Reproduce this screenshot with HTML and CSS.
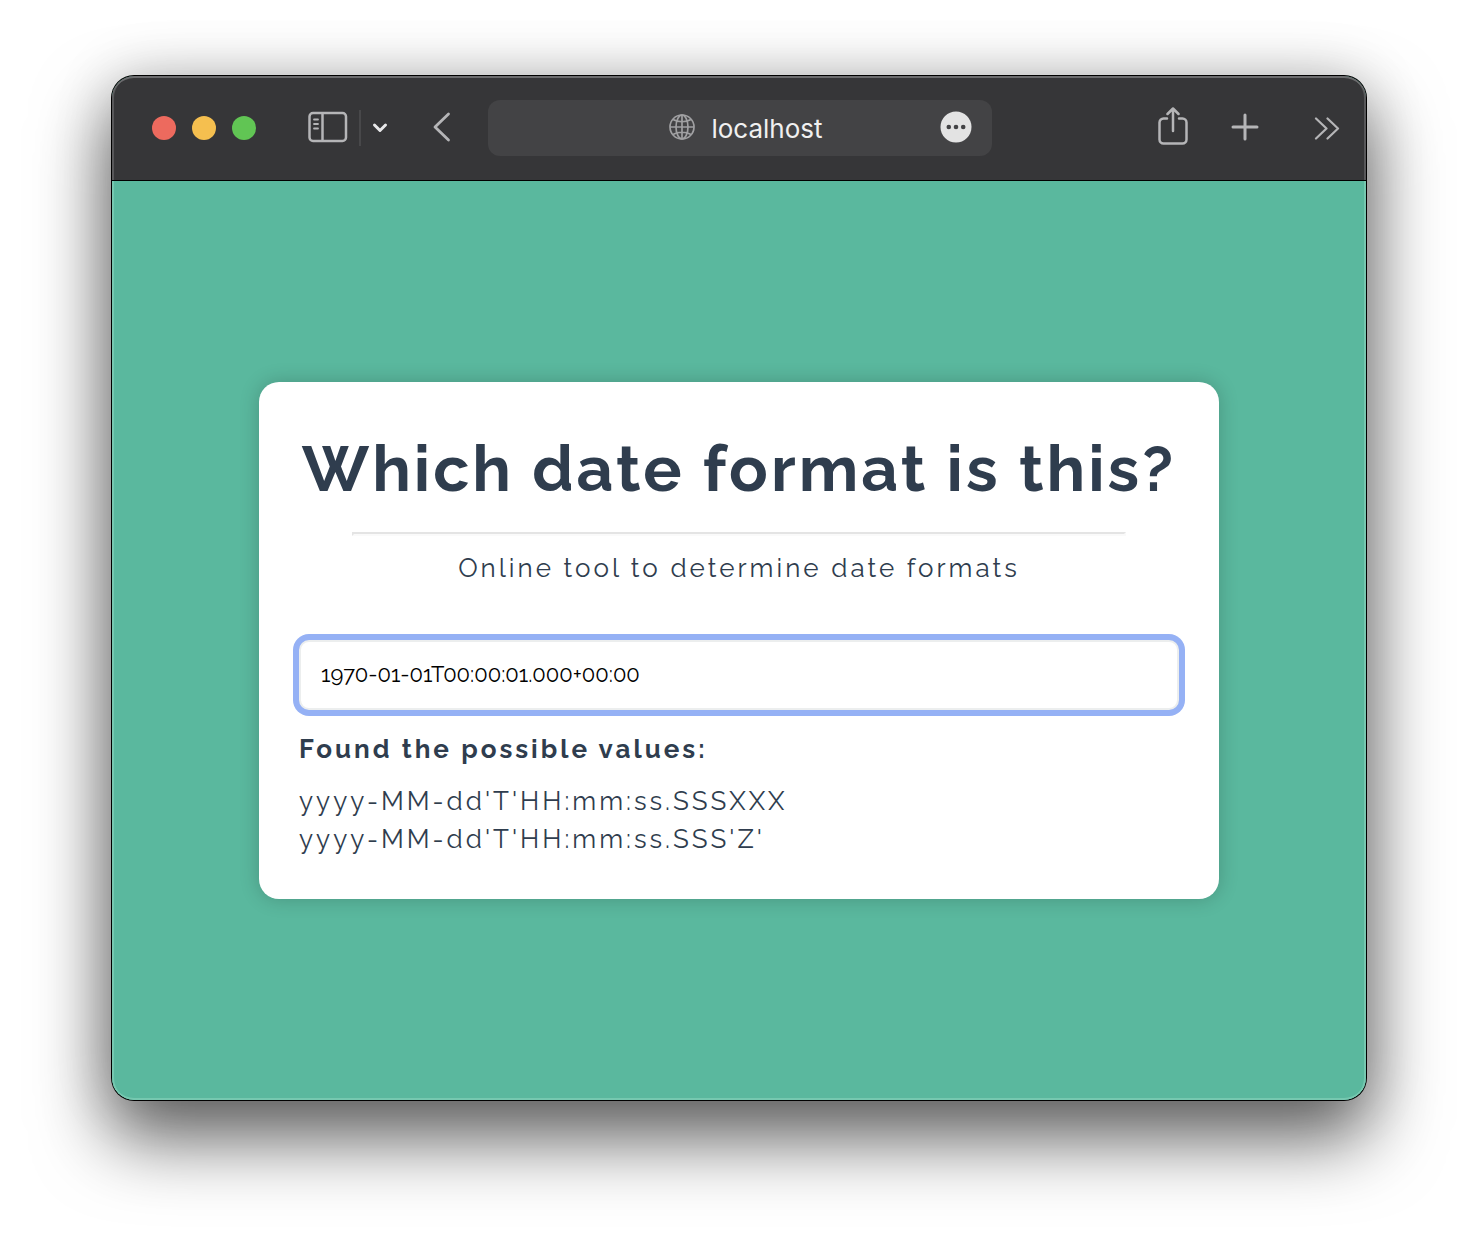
FILE: index.html
```html
<!DOCTYPE html>
<html lang="en">
<head>
  <meta charset="utf-8">
  <meta name="viewport" content="width=device-width, initial-scale=1">
  <title>Which date format is this?</title>
  <link rel="stylesheet" href="styles.css">
</head>
<body>
  <div class="window">
    <header class="toolbar">
      <div class="toolbar-group">
        <div class="lights">
          <button class="light light-close" aria-label="Close"></button>
          <button class="light light-minimize" aria-label="Minimize"></button>
          <button class="light light-zoom" aria-label="Zoom"></button>
        </div>
        <div class="sidebar-controls">
          <button class="icon-button" aria-label="Show sidebar">
            <svg width="40" height="34" viewBox="0 0 40 34" fill="none" stroke="currentColor" stroke-width="2.500">
              <rect x="1.500" y="2" width="36.500" height="28" rx="3.500"/>
              <path d="M14.500 2v28"/>
              <path d="M6 8.500h4M6 13h4M6 17.500h4" stroke-width="1.800" stroke-linecap="round"/>
            </svg>
          </button>
          <span class="divider"></span>
          <button class="icon-button icon-bright" aria-label="Sidebar options">
            <svg width="16" height="12" viewBox="0 0 16 12" fill="none" stroke="currentColor" stroke-width="3" stroke-linecap="round" stroke-linejoin="round">
              <path d="M2.500 3L8 8.500 13.500 3"/>
            </svg>
          </button>
        </div>
        <button class="icon-button" aria-label="Back">
          <svg width="20" height="32" viewBox="0 0 20 32" fill="none" stroke="currentColor" stroke-width="2.800" stroke-linecap="round" stroke-linejoin="round">
            <path d="M16.500 2L3 15l13.500 13"/>
          </svg>
        </button>
      </div>
      <div class="address">
        <div class="address-site">
          <svg width="26" height="28" viewBox="0 0 26 28" fill="none" stroke="currentColor" stroke-width="1.700">
            <circle cx="13" cy="13" r="12"/>
            <ellipse cx="13" cy="13" rx="6" ry="12"/>
            <path d="M13 1v24M1 13h24M4 5.500c5 3 13 3 18 0M4 20.500c5-3 13-3 18 0"/>
          </svg>
          <span class="address-text">localhost</span>
        </div>
        <button class="icon-button address-more" aria-label="Page menu">
          <svg width="32" height="34" viewBox="0 0 32 34">
            <circle cx="16" cy="16" r="15.500" fill="#e3e3e3"/>
            <g fill="#434345"><circle cx="8.800" cy="16" r="2.300"/><circle cx="16" cy="16" r="2.300"/><circle cx="23.200" cy="16" r="2.300"/></g>
          </svg>
        </button>
      </div>
      <div class="toolbar-group toolbar-actions">
        <button class="icon-button" aria-label="Share">
          <svg width="30" height="42" viewBox="0 0 30 42" fill="none" stroke="currentColor" stroke-width="2.500" stroke-linecap="round" stroke-linejoin="round">
            <path d="M9 11.500H5.500a4 4 0 0 0-4 4V32.500a4 4 0 0 0 4 4h19a4 4 0 0 0 4-4V15.500a4 4 0 0 0-4-4H21M15 24V2M9.500 7l5.500-5.500L20.500 7"/>
          </svg>
        </button>
        <button class="icon-button" aria-label="New tab">
          <svg width="28" height="30" viewBox="0 0 28 30" fill="none" stroke="currentColor" stroke-width="3" stroke-linecap="round">
            <path d="M14 2v24M2 14h24"/>
          </svg>
        </button>
        <button class="icon-button icon-overflow" aria-label="More toolbar items">
          <svg width="26" height="24" viewBox="0 0 26 24" fill="none" stroke="currentColor" stroke-width="2.200" stroke-linecap="round" stroke-linejoin="round">
            <path d="M2 2.500l10.500 10L2 22.500M13.500 2.500l10.500 10-10.500 10"/>
          </svg>
        </button>
      </div>
    </header>
    <main class="page">
      <section class="card">
        <h1 class="title">Which date format is this?</h1>
        <hr class="rule">
        <p class="subtitle">Online tool to determine date formats</p>
        <input class="date-input" type="text" aria-label="Date" value="1970-01-01T00:00:01.000+00:00">
        <h2 class="results-title">Found the possible values:</h2>
        <ul class="results">
          <li>yyyy-MM-dd'T'HH:mm:ss.SSSXXX</li>
          <li>yyyy-MM-dd'T'HH:mm:ss.SSS'Z'</li>
        </ul>
      </section>
    </main>
  </div>
</body>
</html>
```
FILE: styles.css
```css
* {
  box-sizing: border-box;
}

body {
  margin: 0;
  min-height: 100vh;
  padding: 76px 112px 148px;
  display: flex;
  background: #fff;
  color: #2f3d4e;
  font-family: Raleway, Lato, sans-serif;
}

.window {
  flex: 1;
  min-width: 0;
  display: flex;
  flex-direction: column;
  border-radius: 22px;
  overflow: hidden;
  background: #5ab89e;
  box-shadow: 0 0 0 1px #000, 0 36px 72px 4px rgba(0, 0, 0, 0.6), 0 0 60px rgba(0, 0, 0, 0.16);
}

.toolbar {
  display: grid;
  grid-template-columns: 1fr minmax(0, 504px) 1fr;
  align-items: center;
  height: 105px;
  padding-left: 2px;
  background: #363638;
  border-bottom: 1px solid #000;
  border-radius: 22px 22px 0 0;
  box-shadow: inset 0 2px #6c6c6e, inset 2px 0 #58585a, inset -2px 0 #58585a;
  color: #b5b5b7;
}

.toolbar-group {
  display: flex;
  align-items: center;
  padding-left: 38px;
}

.lights {
  display: flex;
  gap: 16px;
  margin-right: 52px;
}

.light {
  width: 24px;
  height: 24px;
  padding: 0;
  border: 0;
  border-radius: 50%;
}

.light-close {
  background: #ed6a5e;
}

.light-minimize {
  background: #f5bf4f;
}

.light-zoom {
  background: #61c554;
}

.icon-button {
  display: flex;
  padding: 0;
  border: 0;
  background: none;
  color: inherit;
}

.icon-bright {
  color: #e8e8ea;
}

.sidebar-controls {
  display: flex;
  align-items: center;
  gap: 11px;
  margin-right: 44px;
}

.divider {
  width: 2px;
  height: 36px;
  background: #48484a;
}

.address {
  display: grid;
  grid-template-columns: 1fr auto 1fr;
  align-items: center;
  height: 56px;
  padding: 0 20px 0 32px;
  border-radius: 12px;
  background: #434345;
}

.address-site {
  grid-column: 2;
  display: flex;
  align-items: center;
  gap: 16px;
  color: #a0a0a2;
}

.address-text {
  padding-top: 2px;
  color: #f0f0f0;
  font-family: Inter, sans-serif;
  font-size: 26px;
  line-height: 32px;
}

.address-more {
  justify-self: end;
}

.toolbar-actions {
  justify-content: flex-end;
  padding: 0 26px 0 0;
  gap: 43px;
}

.icon-overflow {
  margin-left: 12px;
}

.page {
  flex: 1;
  display: flex;
  align-items: center;
  justify-content: center;
  padding: 40px;
  border-radius: 0 0 22px 22px;
  box-shadow: inset 0 -2px #76c8b0, inset 2px 0 #76c8b0, inset -2px 0 #76c8b0;
}

.card {
  width: 100%;
  max-width: 960px;
  padding: 47px 40px 41px;
  border-radius: 20px;
  background: #fff;
  box-shadow: 0 0 20px rgba(0, 0, 0, 0.2);
  letter-spacing: 3px;
}

.title {
  margin: 0 0 23px;
  font-size: 64px;
  line-height: 80px;
  text-align: center;
  white-space: nowrap;
}

.rule {
  width: 88%;
  height: 4px;
  margin: 0 auto 13px;
  border: 2px solid;
  border-color: #e4e4e4 #fafafa #fafafa #e4e4e4;
}

.subtitle {
  margin: 0 0 53px;
  font-size: 26px;
  line-height: 38px;
  text-align: center;
}

.date-input {
  display: block;
  width: 100%;
  height: 70px;
  padding: 0 20px 2px;
  border: 2px solid #eceeee;
  border-radius: 10px;
  outline: 0;
  box-shadow: 0 0 0 6px #95b1f5;
  background: #fff;
  color: #000;
  font-family: inherit;
  font-size: 22px;
}

.results-title {
  margin: 20px 0 14px;
  font-size: 26px;
  line-height: 38px;
}

.results {
  margin: 0;
  padding: 0;
  list-style: none;
  font-size: 26px;
  line-height: 38px;
}

@media (max-width: 1200px) {
  .title {
    white-space: normal;
  }
}
```
